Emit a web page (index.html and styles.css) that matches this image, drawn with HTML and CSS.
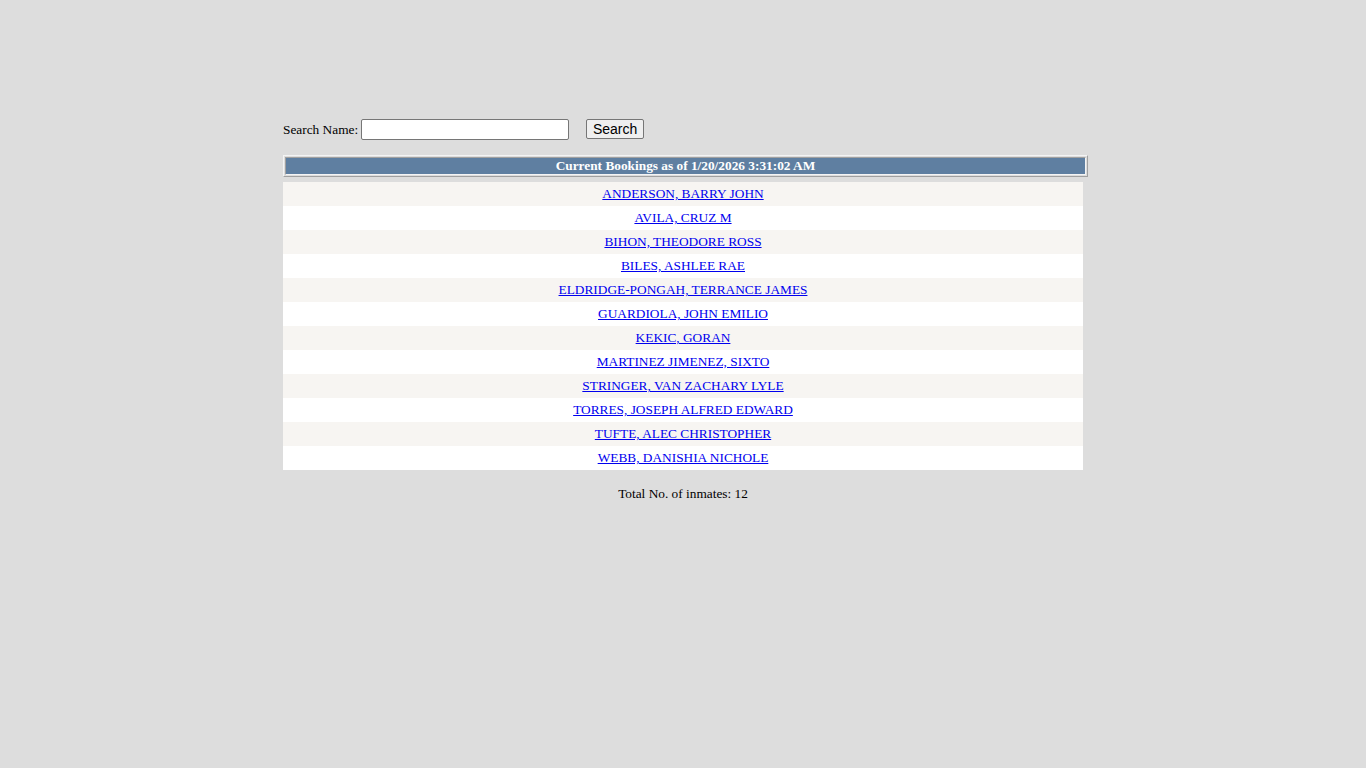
FILE: index.html
```html
<!DOCTYPE html>
<html>
<head>
<meta charset="utf-8">
<title>Current Bookings</title>
<link rel="stylesheet" href="styles.css">
</head>
<body>
<div class="page">
  <form class="search">
    <label class="search-label">Search Name:</label>
    <input class="search-input" type="text">
    <button class="search-btn" type="button">Search</button>
  </form>
  <div class="header-outer">
    <div class="header-cell">Current Bookings as of 1/20/2026 3:31:02 AM</div>
  </div>
  <div class="list">
    <div class="row alt"><a href="#">ANDERSON, BARRY JOHN</a></div>
    <div class="row"><a href="#">AVILA, CRUZ M</a></div>
    <div class="row alt"><a href="#">BIHON, THEODORE ROSS</a></div>
    <div class="row"><a href="#">BILES, ASHLEE RAE</a></div>
    <div class="row alt"><a href="#">ELDRIDGE-PONGAH, TERRANCE JAMES</a></div>
    <div class="row"><a href="#">GUARDIOLA, JOHN EMILIO</a></div>
    <div class="row alt"><a href="#">KEKIC, GORAN</a></div>
    <div class="row"><a href="#">MARTINEZ JIMENEZ, SIXTO</a></div>
    <div class="row alt"><a href="#">STRINGER, VAN ZACHARY LYLE</a></div>
    <div class="row"><a href="#">TORRES, JOSEPH ALFRED EDWARD</a></div>
    <div class="row alt"><a href="#">TUFTE, ALEC CHRISTOPHER</a></div>
    <div class="row"><a href="#">WEBB, DANISHIA NICHOLE</a></div>
  </div>
  <div class="total">Total No. of inmates: 12</div>
</div>
</body>
</html>
```
FILE: styles.css
```css
html, body {
  margin: 0;
  padding: 0;
  background: #dddddd;
  font-family: "Liberation Serif", "Times New Roman", serif;
  font-size: 13.33px;
  color: #000;
}
.page {
  width: 800px;
  margin: 0 auto;
  padding-top: 119px;
}
.search {
  display: flex;
  align-items: center;
  height: 21px;
  margin: 0;
}
.search-label {
  margin-right: 3px;
}
.search-input {
  box-sizing: border-box;
  width: 208px;
  height: 21px;
  margin: 0;
  border: 1px solid #767676;
  border-radius: 2px;
  background: #fff;
  padding: 1px 2px;
}
.search-btn {
  box-sizing: border-box;
  align-self: flex-start;
  margin: 0 0 0 17px;
  height: 20px;
  width: 58px;
  padding: 0;
  font-family: "Liberation Sans", Arial, sans-serif;
  font-size: 14px;
  line-height: 17px;
  color: #000;
  background: #efefef;
  border: 1px solid #767676;
  border-radius: 2px;
}
.header-outer {
  box-sizing: border-box;
  width: 805px;
  height: 22px;
  margin-top: 15px;
  padding: 1px;
  border: 1px solid;
  border-color: #f4f4f4 #a0a0a0 #a0a0a0 #f4f4f4;
}
.header-cell {
  box-sizing: border-box;
  height: 18px;
  border: 1px solid;
  border-color: #a0a0a0 #f4f4f4 #f4f4f4 #a0a0a0;
  background: #5f7fa1;
  color: #fff;
  font-weight: bold;
  text-align: center;
  line-height: 15px;
}
.list {
  margin-top: 5px;
}
.row {
  height: 24px;
  line-height: 24px;
  text-align: center;
  background: #ffffff;
}
.row.alt {
  background: #f7f5f2;
}
.row a {
  color: #0000ee;
  text-decoration: underline;
}
.total {
  text-align: center;
  margin-top: 16px;
  line-height: 16px;
}
```
